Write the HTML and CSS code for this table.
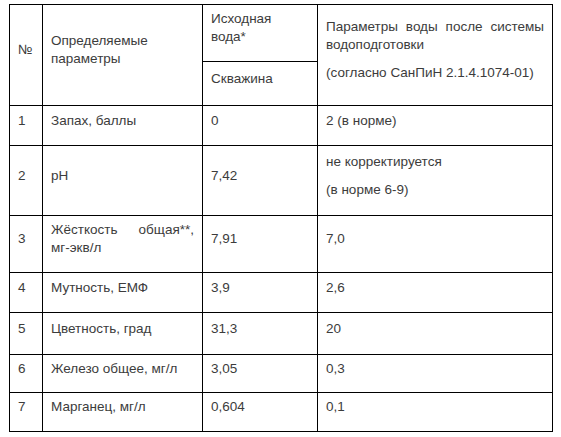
FILE: index.html
```html
<!DOCTYPE html>
<html lang="ru">
<head>
<meta charset="utf-8">
<title>Параметры воды</title>
<link rel="stylesheet" href="styles.css">
</head>
<body>
<table class="data">
  <colgroup>
    <col class="c-num">
    <col class="c-name">
    <col class="c-src">
    <col class="c-res">
  </colgroup>
  <tr class="h1">
    <td rowspan="2"><p>№</p></td>
    <td rowspan="2"><p>Определяемые параметры</p></td>
    <td><p>Исходная вода*</p></td>
    <td rowspan="2"><p>Параметры воды после системы водоподготовки</p><p>(согласно СанПиН 2.1.4.1074-01)</p></td>
  </tr>
  <tr class="h2">
    <td><p>Скважина</p></td>
  </tr>
  <tr class="r1">
    <td><p>1</p></td>
    <td><p>Запах, баллы</p></td>
    <td><p>0</p></td>
    <td><p>2 (в норме)</p></td>
  </tr>
  <tr class="r2">
    <td><p>2</p></td>
    <td><p>pH</p></td>
    <td><p>7,42</p></td>
    <td><p>не корректируется</p><p>(в норме 6-9)</p></td>
  </tr>
  <tr class="r3">
    <td><p>3</p></td>
    <td><p>Жёсткость общая**, <span class="nw">мг-экв/л</span></p></td>
    <td><p>7,91</p></td>
    <td><p>7,0</p></td>
  </tr>
  <tr class="r4">
    <td><p>4</p></td>
    <td><p>Мутность, ЕМФ</p></td>
    <td><p>3,9</p></td>
    <td><p>2,6</p></td>
  </tr>
  <tr class="r5">
    <td><p>5</p></td>
    <td><p>Цветность, град</p></td>
    <td><p>31,3</p></td>
    <td><p>20</p></td>
  </tr>
  <tr class="r6">
    <td><p>6</p></td>
    <td><p>Железо общее, мг/л</p></td>
    <td><p>3,05</p></td>
    <td><p>0,3</p></td>
  </tr>
  <tr class="r7">
    <td><p>7</p></td>
    <td><p>Марганец, мг/л</p></td>
    <td><p>0,604</p></td>
    <td><p>0,1</p></td>
  </tr>
</table>
</body>
</html>
```

FILE: styles.css
```css
html, body {
  margin: 0;
  background: #fff;
}
body {
  padding: 4px 0 0 9px;
  font-family: "Liberation Sans", Arial, sans-serif;
  font-size: 13.5px;
  line-height: 18px;
  color: #3c3c3c;
}
.data {
  border-collapse: collapse;
  table-layout: fixed;
  width: 544px;
}
.c-num { width: 33px; }
.c-name { width: 160px; }
.c-src { width: 115px; }
.c-res { width: 235px; }
.data td {
  border: 1px solid #000;
  padding: 0 8px;
  vertical-align: middle;
}
.data p {
  margin: 0 0 10px;
  text-align: justify;
}
.nw { white-space: nowrap; }
.h1 { height: 57px; }
.h2 { height: 44px; }
.r1 { height: 40px; }
.r2 { height: 70px; }
.r3 { height: 57px; }
.r4 { height: 40px; }
.r5 { height: 42px; }
.r6 { height: 38px; }
.r7 { height: 39px; }
```
